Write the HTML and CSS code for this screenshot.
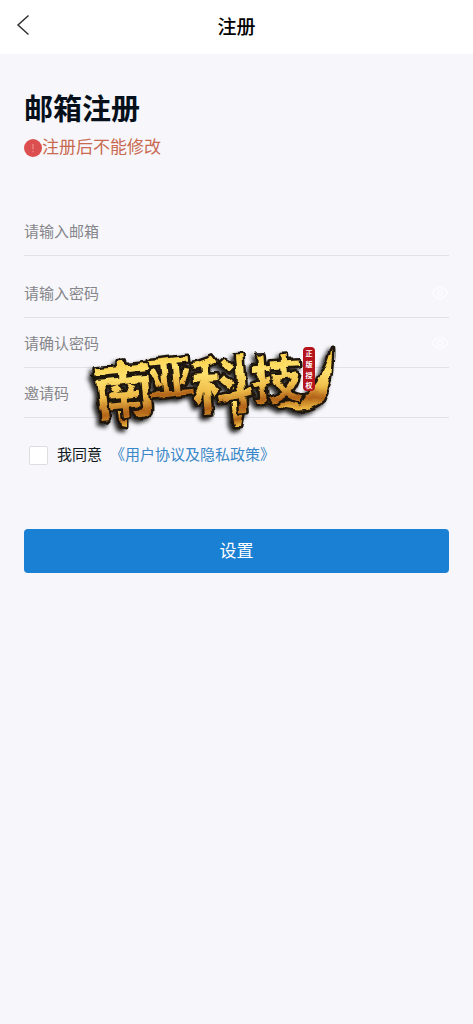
FILE: index.html
```html
<!DOCTYPE html>
<html lang="zh-CN">
<head>
<meta charset="utf-8">
<meta name="viewport" content="width=device-width, initial-scale=1">
<title>注册</title>
<link rel="stylesheet" href="styles.css">
</head>
<body>
<header class="topbar">
  <button class="back" type="button" aria-label="返回">
    <svg width="14" height="22" viewBox="0 0 14 22"><path d="M12.500 1.500 2 11l10.500 9.500"/></svg>
  </button>
  <h1 class="topbar-title">注册</h1>
</header>
<main class="page">
  <h2 class="title">邮箱注册</h2>
  <p class="notice">
    <svg width="18" height="18" viewBox="0 0 18 18" aria-hidden="true"><circle cx="9" cy="9" r="9" fill="#dc4f50"/><path d="M9 5v5.500M9 12v1.200" stroke="#ee8d86" stroke-width="1.200"/></svg>
    <span>注册后不能修改</span>
  </p>
  <form class="form">
    <div class="fields">
      <div class="field field-email">
        <input class="input" type="email" placeholder="请输入邮箱" aria-label="邮箱">
      </div>
      <div class="field">
        <input class="input" type="password" placeholder="请输入密码" aria-label="密码">
        <button class="eye" type="button" aria-label="显示密码">
          <svg width="18" height="14" viewBox="0 0 18 14"><path d="M1 7q8-11 16 0-8 11-16 0z"/><circle cx="9" cy="7" r="2.500"/></svg>
        </button>
      </div>
      <div class="field">
        <input class="input" type="password" placeholder="请确认密码" aria-label="确认密码">
        <button class="eye" type="button" aria-label="显示确认密码">
          <svg width="18" height="14" viewBox="0 0 18 14"><path d="M1 7q8-11 16 0-8 11-16 0z"/><circle cx="9" cy="7" r="2.500"/></svg>
        </button>
      </div>
      <div class="field">
        <input class="input" type="text" placeholder="邀请码" aria-label="邀请码">
      </div>
      <svg class="brand" width="270" height="108" viewBox="0 -14 270 108" role="img" aria-label="南亚科技">
        <defs>
          <linearGradient id="gold" x1="0" y1="0" x2="0" y2="1">
            <stop offset="0" stop-color="#f2bd2c"/>
            <stop offset=".4" stop-color="#ffe16c"/>
            <stop offset=".62" stop-color="#eebb48"/>
            <stop offset=".8" stop-color="#b26419"/>
            <stop offset="1" stop-color="#efbc43"/>
          </linearGradient>
          <filter id="brush" x="-10%" y="-10%" width="120%" height="125%">
            <feTurbulence type="fractalNoise" baseFrequency=".09" numOctaves="2" seed="4" result="noise"/>
            <feDisplacementMap in="SourceGraphic" in2="noise" scale="6" xChannelSelector="R" yChannelSelector="G" result="rough"/>
            <feDropShadow in="rough" dx="-3" dy="3" stdDeviation="2" flood-color="#000" flood-opacity=".85"/>
          </filter>
        </defs>
        <g filter="url(#brush)">
          <path d="M5 34q18-1 36-9l-4 9q-16 5-27 5z" fill="#17120c"/>
          <g class="stroke">
            <path d="M37 48q6 18 5 37l-6-1q-3-20-5-33z"/>
            <path d="M157 44q4 20-1 41h-5q-4-20-4-38z"/>
            <path d="M248 6q0 34-9 52-17 18-55 2 30 2 43-11 14-18 21-43z"/>
          </g>
          <text class="glyph glyph-l" transform="rotate(-6 40 50)" x="9" y="71">南</text>
          <text class="glyph glyph-s" transform="rotate(-6 90 40)" x="64" y="52">亚</text>
          <text class="glyph glyph-l" transform="rotate(-4 140 40)" x="107" y="66">科</text>
          <text class="glyph glyph-m" transform="rotate(-4 190 40)" x="167" y="57">技</text>
        </g>
        <rect x="219" y="5" width="12" height="44" rx="4" fill="#b5141c"/>
        <g class="seal"><text x="225" y="14">正</text><text x="225" y="25">版</text><text x="225" y="36">授</text><text x="225" y="46">权</text></g>
      </svg>
    </div>
    <div class="agree">
      <input class="check" id="agree" type="checkbox">
      <label for="agree">我同意</label>
      <a class="policy" href="#policy">《用户协议及隐私政策》</a>
    </div>
    <button class="submit" type="submit">设置</button>
  </form>
</main>
</body>
</html>
```
FILE: styles.css
```css
* { box-sizing: border-box; }

body {
  margin: 0;
  min-height: 100vh;
  background: #f7f7fb;
  color: #101820;
  font: 15px/20px "Liberation Sans", "Noto Sans CJK SC", sans-serif;
}

button, input { font: inherit; }

.topbar {
  display: grid;
  grid-template-columns: 48px 1fr 48px;
  align-items: center;
  height: 54px;
  background: #fff;
}

.back {
  display: flex;
  padding: 0 0 4px 16px;
  border: 0;
  background: none;
}

.back svg { fill: none; stroke: #333; stroke-width: 1.5; }

.topbar-title {
  margin: 0;
  padding-top: 2px;
  font-size: 19px;
  line-height: 28px;
  font-weight: 500;
  text-align: center;
  color: #000;
}

.page { padding: 38px 24px; }

.title {
  margin: 0;
  font-size: 29px;
  line-height: 36px;
  font-weight: 700;
  color: #06101a;
}

.notice {
  display: flex;
  align-items: center;
  margin: 8px 0 46px;
  font-size: 17px;
  line-height: 24px;
  color: #c96a50;
}

.fields { position: relative; }

.field {
  display: flex;
  align-items: center;
  height: 50px;
  border-bottom: 1px solid #e2e2e6;
}

.field-email { margin-bottom: 12px; }

.input {
  flex: 1;
  min-width: 0;
  padding: 2px 0 0;
  border: 0;
  outline: 0;
  background: none;
  color: #222;
}

.input::placeholder { color: #85858a; opacity: 1; }

.eye {
  display: flex;
  padding: 0;
  border: 0;
  background: none;
}

.eye svg { fill: none; stroke: #fcfcfe; stroke-width: 1.5; }

.brand {
  position: absolute;
  left: 60px;
  top: 122px;
  overflow: visible;
  pointer-events: none;
}

.glyph, .stroke {
  fill: url(#gold);
  stroke: #1c130a;
  stroke-width: 5px;
  stroke-linejoin: round;
  paint-order: stroke;
}

.glyph {
  font-family: "Noto Sans CJK SC", sans-serif;
  font-weight: 700;
}

.glyph-s { font-size: 46px; }
.glyph-m { font-size: 52px; }
.glyph-l { font-size: 62px; }

.seal {
  font-family: "Noto Sans CJK SC", sans-serif;
  font-size: 7px;
  font-weight: 700;
  text-anchor: middle;
  fill: #fff;
}

.agree {
  display: flex;
  align-items: center;
  margin: 27px 0 64px;
  padding-left: 5px;
}

.check {
  appearance: none;
  width: 19px;
  height: 19px;
  margin: 0 9px 0 0;
  border: 1px solid #dedee2;
  border-radius: 2px;
  background: #fff;
}

.check:checked { background: #1a80d4; }

.policy {
  margin-left: 8px;
  color: #3a88c8;
  text-decoration: none;
}

.submit {
  display: block;
  width: 100%;
  height: 44px;
  padding: 2px 0 0;
  border: 0;
  border-radius: 4px;
  background: #1a80d4;
  color: #fff;
  font-size: 17px;
}
```
